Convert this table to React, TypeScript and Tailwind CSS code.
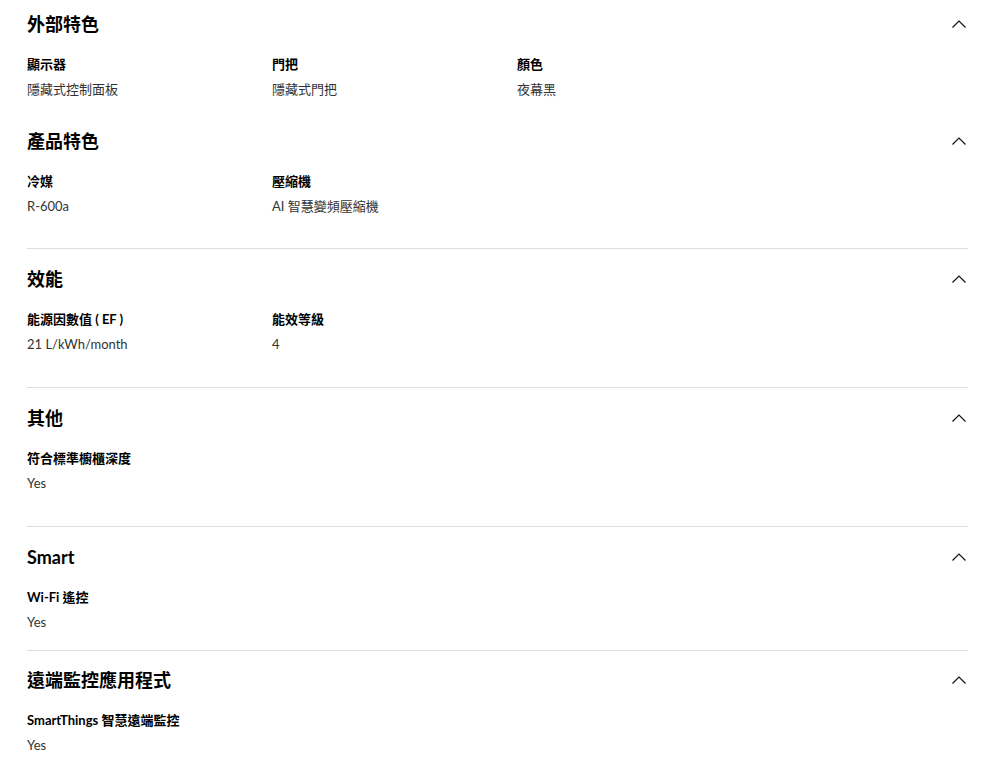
import React from "react";

type Spec = {
  label: string;
  value: string;
};

type SectionType = {
  title: string;
  specs: Spec[];
  top: string;
  bottom: string;
  divider: boolean;
};

const sections: SectionType[] = [
  {
    title: "外部特色",
    specs: [
      { label: "顯示器", value: "隱藏式控制面板" },
      { label: "門把", value: "隱藏式門把" },
      { label: "顏色", value: "夜幕黑" },
    ],
    top: "pt-[10px]",
    bottom: "pb-[28px]",
    divider: false,
  },
  {
    title: "產品特色",
    specs: [
      { label: "冷媒", value: "R-600a" },
      { label: "壓縮機", value: "AI 智慧變頻壓縮機" },
    ],
    top: "pt-0",
    bottom: "pb-[32px]",
    divider: true,
  },
  {
    title: "效能",
    specs: [
      { label: "能源因數值 ( EF )", value: "21 L/kWh/month" },
      { label: "能效等級", value: "4" },
    ],
    top: "pt-[16px]",
    bottom: "pb-[33px]",
    divider: true,
  },
  {
    title: "其他",
    specs: [{ label: "符合標準櫥櫃深度", value: "Yes" }],
    top: "pt-[16px]",
    bottom: "pb-[33px]",
    divider: true,
  },
  {
    title: "Smart",
    specs: [{ label: "Wi-Fi 遙控", value: "Yes" }],
    top: "pt-[16px]",
    bottom: "pb-[18px]",
    divider: true,
  },
  {
    title: "遠端監控應用程式",
    specs: [{ label: "SmartThings 智慧遠端監控", value: "Yes" }],
    top: "pt-[15px]",
    bottom: "pb-[16px]",
    divider: false,
  },
];

const Chevron = () => (
  <svg width="16" height="16" viewBox="0 0 16 16" fill="none" className="text-[#111]">
    <path d="M1.5 11.5 L8 5 L14.5 11.5" stroke="currentColor" strokeWidth="1.2" />
  </svg>
);

const Section = ({ section }: { section: SectionType }) => {
  return (
    <div className={`${section.top} ${section.bottom} ${section.divider ? "border-b border-[#dddddd]" : ""}`}>
      <div className="flex items-center justify-between h-[28px]">
        <h2 className="text-[18px] leading-[28px] font-bold text-black">{section.title}</h2>
        <div className="pr-[1px]">
          <Chevron />
        </div>
      </div>
      <div className="grid grid-cols-[245px_245px_245px] mt-[16px]">
        {section.specs.map((spec) => (
          <div key={spec.label} className="flex flex-col gap-[5px]">
            <div className="text-[13px] leading-[20px] font-bold text-black">{spec.label}</div>
            <div className="text-[13px] leading-[20px] text-[#333333]">{spec.value}</div>
          </div>
        ))}
      </div>
    </div>
  );
};

const App = () => {
  return (
    <div
      className="w-[1000px] bg-white pl-[27px] pr-[32px]"
      style={{ fontFamily: 'Lato, "Noto Sans CJK TC", sans-serif' }}
    >
      {sections.map((section) => (
        <Section key={section.title} section={section} />
      ))}
    </div>
  );
};

export default App;
